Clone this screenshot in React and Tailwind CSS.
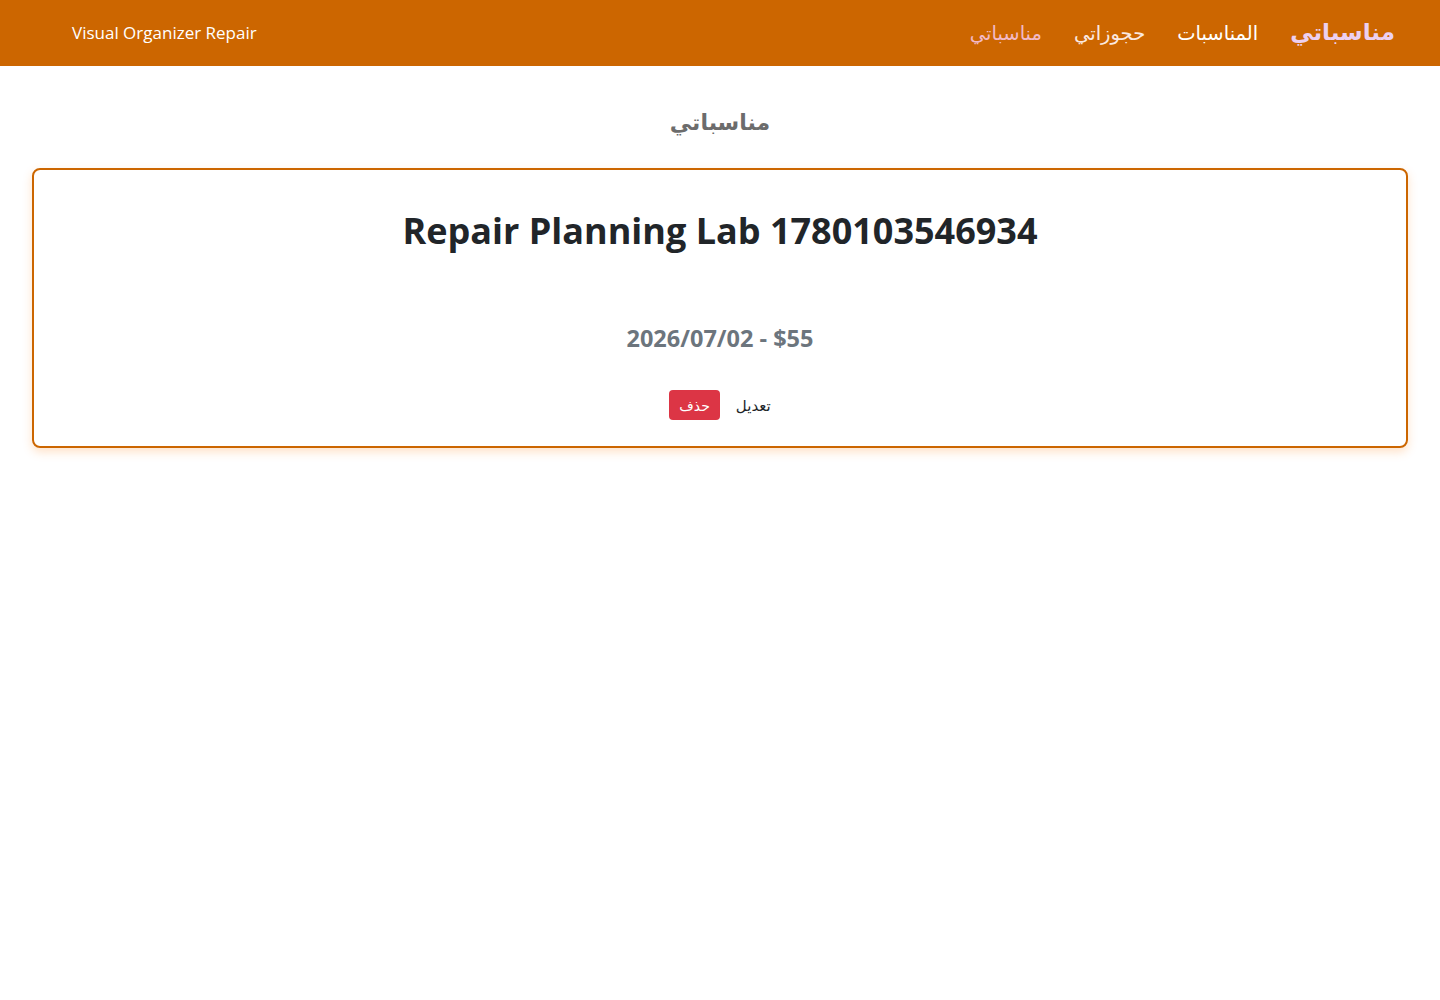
export default function App() {
  return (
    <div dir="rtl" className="min-h-screen bg-white font-['Open_Sans','DejaVu_Sans',sans-serif]">
      <nav className="h-[66px] bg-[#cc6600] flex items-center justify-between pr-[45px] pl-[72px]">
        <div className="flex items-center gap-8">
          <a className="text-[23px] font-bold text-[#ecd0f0] -mt-1">مناسباتي</a>
          <a className="text-[19.5px] text-white">المناسبات</a>
          <a className="text-[19.5px] text-[#fbe9e0]">حجوزاتي</a>
          <a className="text-[19.5px] text-[#f2b9c6]">مناسباتي</a>
        </div>
        <span dir="ltr" className="text-[17px] text-white">Visual Organizer Repair</span>
      </nav>

      <main className="px-8 pt-[39px]">
        <h2 className="text-center text-[22px] font-bold text-[#6c6c6c] mb-[30px]">مناسباتي</h2>

        <div className="border-2 border-[#cc6600] rounded-lg shadow-[0_4px_10px_rgba(255,140,40,0.25)] pt-[38px] pb-[26px] text-center">
          <h3 dir="ltr" className="text-[36px] font-bold text-[#212529] leading-tight">
            Repair Planning Lab 1780103546934
          </h3>
          <p dir="ltr" className="mt-[68px] text-[23.5px] font-bold text-[#6c757d]">2026/07/02 - $55</p>
          <div className="mt-[34px] flex justify-center items-center gap-4">
            <a className="text-[15px] text-[#212529]">تعديل</a>
            <button className="bg-[#dc3545] text-white text-[14px] rounded px-2.5 h-[30px]">حذف</button>
          </div>
        </div>
      </main>
    </div>
  )
}
